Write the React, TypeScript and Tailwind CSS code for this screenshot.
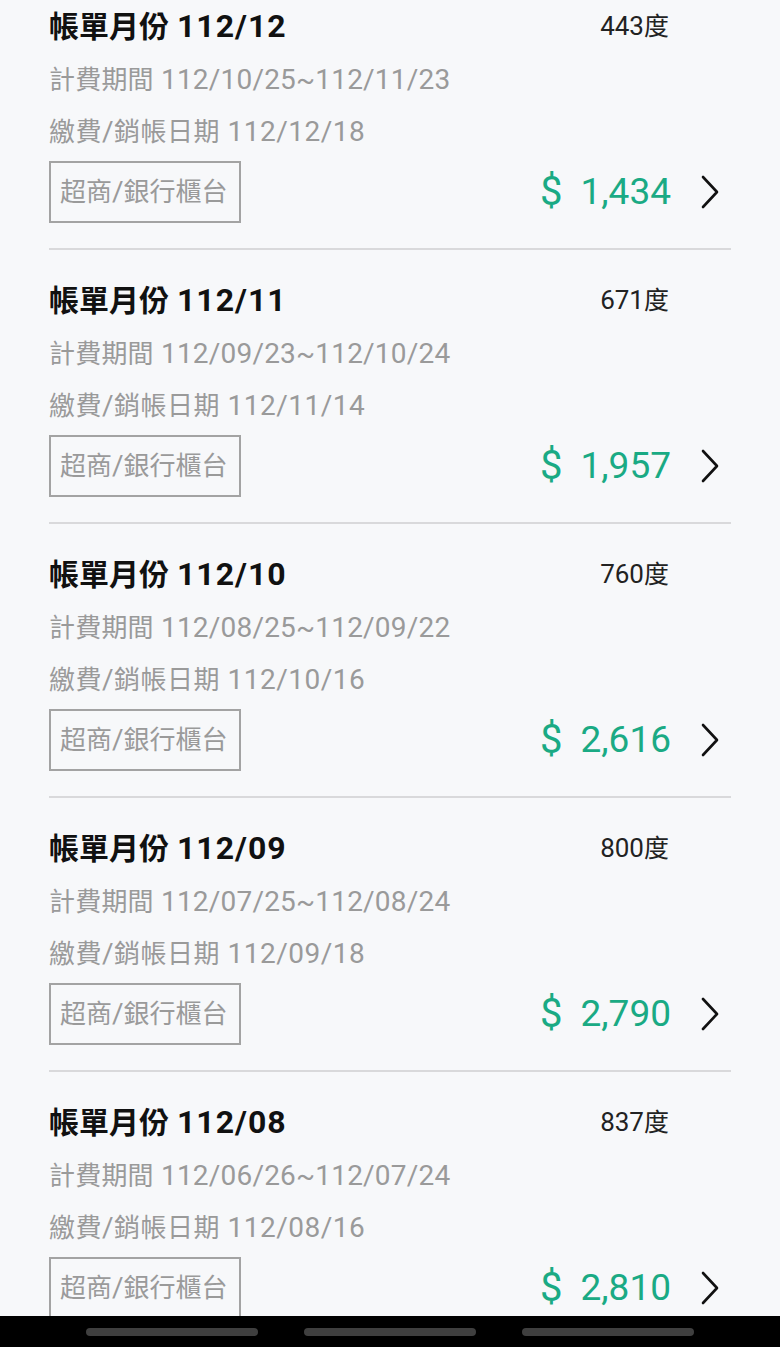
const bills = [
  { month: '112/12', usage: '443', period: '112/10/25~112/11/23', paid: '112/12/18', amount: '1,434' },
  { month: '112/11', usage: '671', period: '112/09/23~112/10/24', paid: '112/11/14', amount: '1,957' },
  { month: '112/10', usage: '760', period: '112/08/25~112/09/22', paid: '112/10/16', amount: '2,616' },
  { month: '112/09', usage: '800', period: '112/07/25~112/08/24', paid: '112/09/18', amount: '2,790' },
  { month: '112/08', usage: '837', period: '112/06/26~112/07/24', paid: '112/08/16', amount: '2,810' },
];

const font = { fontFamily: 'Roboto, "Noto Sans CJK TC", sans-serif' };

function ChevronRight() {
  return (
    <svg width="22" height="36" viewBox="0 0 22 36" fill="none">
      <path d="M4 3 L18 18 L4 33" stroke="#111" strokeWidth="2.6" strokeLinecap="round" strokeLinejoin="round" />
    </svg>
  );
}

function BillItem({ bill }: { bill: (typeof bills)[number] }) {
  return (
    <div className="border-b-2 border-[#d9d9db] pt-[30px] pb-[24px]">
      <div className="flex h-[40px] items-center justify-between pr-[62px]">
        <span className="text-[32px] leading-[40px] font-bold text-[#111]">
          <span className="text-[30px]">帳單月份</span> <span className="tracking-[1px]">{bill.month}</span>
        </span>
        <span className="text-[26px] leading-[40px] text-[#222]">
          {bill.usage}
          <span className="text-[25px]">度</span>
        </span>
      </div>
      <div className="flex h-[52px] items-center mt-[8px] text-[28px] leading-[52px] text-[#9a9a9a] tracking-[0.2px]">
        <span className="text-[26px]">計費期間</span>&nbsp;{bill.period}
      </div>
      <div className="flex h-[52px] items-center text-[28px] leading-[52px] text-[#9a9a9a] tracking-[0.5px]">
        <span className="text-[26px]">繳費</span>/<span className="text-[26px]">銷帳日期</span>&nbsp;{bill.paid}
      </div>
      <div className="flex h-[64px] items-center justify-between mt-[2px]">
        <div className="h-[62px] w-[192px] border-2 border-[#a3a3a3] flex items-center pl-[9px] text-[26px] text-[#9a9a9a]">
          超商<span className="text-[28px]">/</span>銀行櫃台
        </div>
        <div className="flex h-[62px] items-center text-[37px] leading-[44px] text-[#1aaa84]">
          <span className="text-[40px]">$</span>
          <span className="ml-[18px]">{bill.amount}</span>
          <span className="ml-[28px] mr-[10px] flex items-center">
            <ChevronRight />
          </span>
        </div>
      </div>
    </div>
  );
}

export default function App() {
  return (
    <div className="relative w-[780px] h-[1347px] overflow-hidden bg-[#f7f8fa]" style={font}>
      <div className="-mt-[24px] pl-[49px] pr-[49px]">
        {bills.map((b) => (
          <BillItem key={b.month} bill={b} />
        ))}
      </div>
      <div className="absolute left-0 right-0 bottom-0 h-[31px] bg-black flex items-center justify-center gap-[46px]">
        <div className="w-[172px] h-[8px] rounded-full bg-[#3f3f3f]" />
        <div className="w-[172px] h-[8px] rounded-full bg-[#3f3f3f]" />
        <div className="w-[172px] h-[8px] rounded-full bg-[#3f3f3f]" />
      </div>
    </div>
  );
}
